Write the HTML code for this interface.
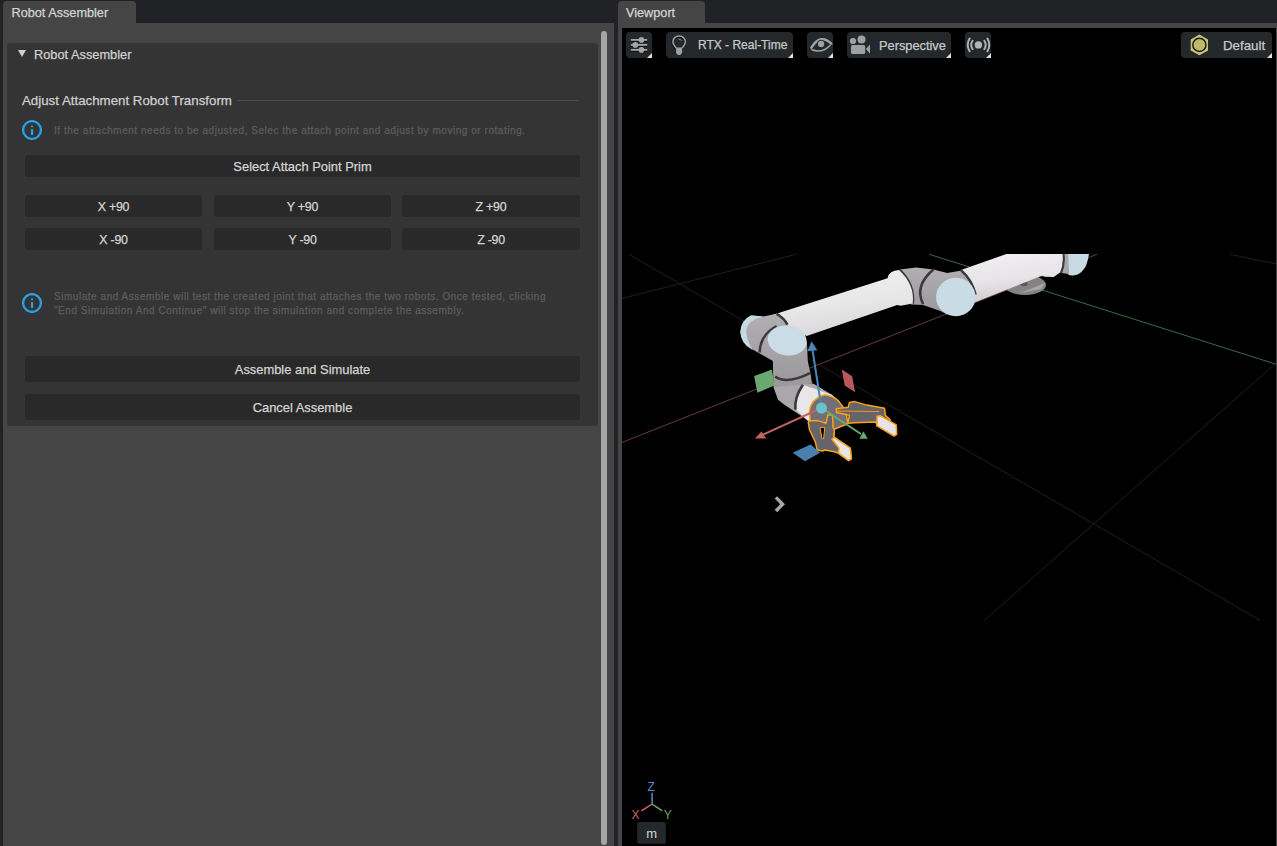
<!DOCTYPE html>
<html><head><meta charset="utf-8">
<style>
*{margin:0;padding:0;box-sizing:border-box}
html,body{width:1277px;height:846px;overflow:hidden;background:#202226;font-family:"Liberation Sans",sans-serif}
.abs{position:absolute}
.tab{position:absolute;background:#454545;border-radius:4px 4px 0 0;color:#d4d4d4;font-size:12.7px;white-space:nowrap}
.panel{position:absolute;background:#454545}
.frame{position:absolute;background:#343434;border-radius:3px}
.btn{position:absolute;background:#292929;border-radius:3px;color:#d4d4d4;font-size:12.9px;text-align:center;white-space:nowrap;padding-top:1px}
.txt{position:absolute;white-space:nowrap}
body{-webkit-text-stroke:0.25px currentColor}
.info{position:absolute;color:#5c5c5c;font-size:10px;letter-spacing:0.54px;white-space:nowrap;line-height:14px}
.icon{position:absolute;width:20px;height:20px;border:2px solid #1e9bf0;border-radius:50%}
.tb{position:absolute;background:#25282b;border-radius:4px;top:32px;height:26px}
.tb .c{position:absolute;right:0;bottom:0;width:0;height:0;border-left:5px solid transparent;border-bottom:5px solid #e0e0e0}
.tbt{position:absolute;color:#c8c8c8;font-size:12.8px;white-space:nowrap}
</style></head><body>
<!-- left tab -->
<div class="tab" style="left:3px;top:1px;width:133px;height:22px"><span class="txt" style="left:8.5px;top:5px">Robot Assembler</span></div>
<div class="panel" style="left:3px;top:23px;width:611px;height:823px"></div>
<div class="frame" style="left:7px;top:43px;width:591px;height:383px"></div>
<!-- scrollbar -->
<div class="abs" style="left:601px;top:31px;width:6px;height:814px;background:#a5a5a5;border-radius:3px"></div>

<!-- header -->
<div class="abs" style="left:18px;top:50px;width:0;height:0;border-left:4px solid transparent;border-right:4px solid transparent;border-top:7.5px solid #d0d0d0"></div>
<span class="txt" style="left:34px;top:47px;color:#d0d0d0;font-size:12.8px">Robot Assembler</span>

<span class="txt" style="left:22px;top:93px;color:#d0d0d0;font-size:13.3px">Adjust Attachment Robot Transform</span>
<div class="abs" style="left:237px;top:100px;width:342px;height:1px;background:#4b4b4b"></div>

<svg class="abs" style="left:22px;top:120px" width="20" height="20" viewBox="0 0 20 20"><circle cx="10" cy="10" r="8.9" fill="none" stroke="#28a0ea" stroke-width="2.3"/><rect x="8.9" y="5.6" width="2.3" height="1.7" rx="0.8" fill="#28a0ea"/><rect x="8.9" y="8.9" width="2.3" height="6.2" rx="0.9" fill="#28a0ea"/></svg>
<div class="info" style="left:54px;top:123.5px">If the attachment needs to be adjusted, Selec the attach point and adjust by moving or rotating.</div>

<div class="btn" style="left:25px;top:155px;width:555px;height:22px;line-height:22px">Select Attach Point Prim</div>
<div class="btn" style="left:25px;top:195px;width:177px;height:22px;line-height:22px;font-size:12.4px;letter-spacing:-0.25px">X +90</div>
<div class="btn" style="left:214px;top:195px;width:177px;height:22px;line-height:22px;font-size:12.4px;letter-spacing:-0.25px">Y +90</div>
<div class="btn" style="left:402px;top:195px;width:178px;height:22px;line-height:22px;font-size:12.4px;letter-spacing:-0.25px">Z +90</div>
<div class="btn" style="left:25px;top:228px;width:177px;height:22px;line-height:22px;font-size:12.4px;letter-spacing:-0.25px">X -90</div>
<div class="btn" style="left:214px;top:228px;width:177px;height:22px;line-height:22px;font-size:12.4px;letter-spacing:-0.25px">Y -90</div>
<div class="btn" style="left:402px;top:228px;width:178px;height:22px;line-height:22px;font-size:12.4px;letter-spacing:-0.25px">Z -90</div>

<svg class="abs" style="left:22px;top:293px" width="20" height="20" viewBox="0 0 20 20"><circle cx="10" cy="10" r="8.9" fill="none" stroke="#28a0ea" stroke-width="2.3"/><rect x="8.9" y="5.6" width="2.3" height="1.7" rx="0.8" fill="#28a0ea"/><rect x="8.9" y="8.9" width="2.3" height="6.2" rx="0.9" fill="#28a0ea"/></svg>
<div class="info" style="left:54px;top:289.5px">Simulate and Assemble will test the created joint that attaches the two robots. Once tested, clicking<br>"End Simulation And Continue" will stop the simulation and complete the assembly.</div>

<div class="btn" style="left:25px;top:356px;width:555px;height:26px;line-height:25px">Assemble and Simulate</div>
<div class="btn" style="left:25px;top:394px;width:555px;height:26px;line-height:25px">Cancel Assemble</div>

<!-- right tab -->
<div class="tab" style="left:618px;top:1px;width:87px;height:22px"><span class="txt" style="left:8px;top:5px">Viewport</span></div>
<div class="panel" style="left:618px;top:23px;width:659px;height:823px"></div>
<div class="abs" style="left:622px;top:28px;width:654px;height:818px;background:#000"></div>


<svg class="abs" style="left:622px;top:28px" width="654" height="818" viewBox="622 28 654 818">
<defs>
<linearGradient id="tubeU" x1="0" y1="0" x2="0.25" y2="1"><stop offset="0" stop-color="#f2f0f2"/><stop offset="0.6" stop-color="#e6e4e6"/><stop offset="1" stop-color="#cfcdd0"/></linearGradient>
<linearGradient id="tubeL" x1="0" y1="0" x2="0.3" y2="1"><stop offset="0" stop-color="#f0eff0"/><stop offset="0.6" stop-color="#e9e8e9"/><stop offset="1" stop-color="#dad8da"/></linearGradient>
<linearGradient id="grayJ" x1="0" y1="0" x2="0" y2="1"><stop offset="0" stop-color="#b2afb2"/><stop offset="0.5" stop-color="#a6a3a6"/><stop offset="1" stop-color="#9a979a"/></linearGradient>
<clipPath id="clipTop"><rect x="622" y="254" width="654" height="600"/></clipPath>
</defs>
<g fill="none" stroke-width="1">
<line x1="628.8" y1="254.2" x2="1260.6" y2="620.7" stroke="#1f1f1f"/>
<line x1="796.6" y1="254.2" x2="622" y2="298.4" stroke="#1f1f1f"/>
<line x1="1275" y1="364" x2="984" y2="620.7" stroke="#1f1f1f"/>
<line x1="1229.6" y1="254.3" x2="1276" y2="263.8" stroke="#1f1f1f"/>
<line x1="929.3" y1="254.3" x2="1276" y2="364.2" stroke="#3c6a44"/>
<line x1="1097" y1="254.3" x2="622" y2="442.4" stroke="#6a3a3a"/>
</g>
<g clip-path="url(#clipTop)">
<!-- base disc -->
<ellipse cx="1025" cy="285" rx="21" ry="10" fill="#858284"/>
<path d="M1020,293 L1041,289 L1045,283 L1028,290 Z" fill="#a9a7a9"/>
<ellipse cx="1024" cy="284" rx="4" ry="2" fill="#5a5858"/>
<!-- upper tube -->
<path d="M961,270 L1006.4,254 L1064,254 L1061.5,271.5 L1053.7,277 L1045,276.7 L1041.7,275.8 L974.7,302.4 Z" fill="url(#tubeU)"/>
<path d="M1063,254 L1068.4,254 L1068.4,274 L1062,273 Z" fill="#a9a7aa"/>
<path d="M1063.5,254 Q1065,264 1061,273" stroke="#3a3a3c" stroke-width="2" fill="none"/>
<path d="M1068,254 L1089,254 Q1087,266 1083.9,269 Q1079,276 1072,275.5 L1068.4,275 Z" fill="#c9dae4"/>
<!-- elbow gray -->
<path d="M899.8,269.6 L916.2,267.5 L933.4,269.6 L947.2,273.1 L961.8,270.5 L975.6,293.8 L960,300 L947.2,314.4 L940.3,311 L923,305 L911,304.5 Z" fill="url(#grayJ)"/>
<path d="M899.5,269.8 Q915,285 912.7,303.5" stroke="#3a3a3c" stroke-width="2.6" fill="none"/>
<path d="M933.4,269.6 Q914,286 923.1,304.1" stroke="#3a3a3c" stroke-width="2.6" fill="none"/>
<path d="M961,270.1 Q972,280 975.6,294.5" stroke="#3a3a3c" stroke-width="2.6" fill="none"/>
<ellipse cx="955.8" cy="297" rx="19.8" ry="19.2" fill="#c9dbe5"/>
<!-- lower tube -->
<path d="M764.5,317.5 L887.5,278.3 Q889,270.5 899,270.1 Q915,285 912.7,303.5 L900.7,305.8 L897.2,305 L806.7,336.1 Z" fill="url(#tubeL)"/>
<!-- shoulder joint -->
<path d="M752,315.7 L763.4,316.6 L776.6,313.8 L787.5,324.7 L806.9,342 L807.8,361 L810.6,374.3 L812,383.2 L775.7,390 L773.5,387.3 L772.8,361 L753,349.7 L740.2,331.7 Z" fill="url(#grayJ)"/>
<path d="M751,315.2 Q741,320 740.2,331.7 Q741,344 751.5,349.2 L753,349.7 Q746,340 746.3,330 Q748,320 763.4,316.6 Z" fill="#c6d8e2"/>
<path d="M776.6,313.8 Q784,318 787.5,324.7" stroke="#3a3a3c" stroke-width="2.5" fill="none"/>
<path d="M776.6,326 Q760,335 759.6,352.6" stroke="#3a3a3c" stroke-width="2.4" fill="none"/>
<ellipse cx="787.2" cy="340.5" rx="19.6" ry="15" transform="rotate(8 787.2 340.5)" fill="#cadce6"/>
<!-- wrist lower -->
<path d="M773.5,387.3 L812,383.2 L815.3,384.8 L831.8,394.7 L840,402 L813,425 L802.9,417 L784.7,405 L778,399.7 Z" fill="#aaa7aa"/>
<path d="M775.2,376.5 Q786.4,385 810,373.2" stroke="#3a3a3c" stroke-width="2.6" fill="none"/>
<path d="M802.9,384.8 L831.8,394.7 L840,402 L813,425 L795.5,409.6 Q796,395 802.9,384.8 Z" fill="#e8e6e8"/>
<path d="M802.9,384.8 Q794,398 795.5,409.6" stroke="#3a3a3c" stroke-width="2.6" fill="none"/>
</g>

<!-- gripper -->
<g stroke="#f7a21a" stroke-width="1.5" stroke-linejoin="round">
<path d="M809.3,412.7 Q810,399 824.8,394.7 Q834,396 839,401.8 L842.3,406 L846,412 L847.8,423.2 L844.9,425 L841.4,426.2 L834.3,429.2 L833.7,436.9 L826,438 L817,436 Q810,425 809.3,412.7 Z" fill="#727076"/>
<path d="M836.1,408.8 L848.3,407.2 L849.4,402.4 L854.7,401.6 L866.9,405.1 L884.5,408.3 L885.3,415.2 L890.3,420 L877,425.9 L876,422.1 L854.7,422.7 L847.8,423.2 L849.4,415.2 L836.6,412.6 Z" fill="#66646a"/>
<path d="M877,416.3 L880.2,415.7 L896.2,424.8 L896.7,434.4 L894,436 L877,425.9 Z" fill="#e6e4ea"/>
<path d="M837.1,411 L879.1,411.5" stroke-width="0.9"/>
<path d="M808.9,420.9 L817.7,420.6 L826,423.3 L827.8,415 L832.5,415 L833.1,428 L834.3,429.2 L833.7,436.9 L834.9,437.5 L850.2,448.1 L851.4,458.7 L848.5,460.5 L837.8,452.8 L833.1,451.6 L824.8,449.9 L822.5,451 L817.1,449.9 L815.4,442.2 L809.5,429.8 L808.3,422.7 Z" fill="#66646a"/>
<path d="M831.9,439.2 L834.3,437.5 L850.2,448.1 L851.4,458.7 L848.5,460.5 L838.4,452.8 L839,448.1 Z" fill="#e6e4ea"/>
<path d="M820.1,427.4 L824.8,427.4 L823.6,438.6 L821.9,438.6 Z" fill="#000" stroke-width="1"/>
</g>
<!-- gizmo -->
<path d="M754.1,376.1 L771.9,369.5 L774.4,385.6 L757.4,392.7 Z" fill="#6aa870"/>
<path d="M841.8,369.6 L852.2,376.2 L855.1,392.3 L844.7,385.6 Z" fill="#b85a5c"/>
<path d="M792.7,452.8 L810.6,444.6 L820.1,452.8 L805,461.3 Z" fill="#4a80ae"/>
<line x1="821.5" y1="408" x2="812.5" y2="350" stroke="#4a86b8" stroke-width="2"/>
<path d="M811.6,341.2 L807.3,351.2 L817.3,350.2 Z" fill="#4a86b8"/>
<line x1="821.5" y1="408" x2="762" y2="435" stroke="#c06262" stroke-width="2"/>
<path d="M754.9,438.6 L761.5,431.5 L766.2,438.6 Z" fill="#c06262"/>
<line x1="821.5" y1="408" x2="861" y2="434" stroke="#6aaa70" stroke-width="2"/>
<path d="M859.4,438.8 L863.4,431.2 L867.8,438.8 Z" fill="#6aaa70"/>
<circle cx="821.5" cy="408" r="5.5" fill="#6cc2ca"/>
<!-- chevron -->
<path d="M775.9,497.4 L782.6,504.2 L775.9,511" stroke="#a6a6a6" stroke-width="3.4" fill="none"/>
<!-- axis gizmo -->
<line x1="652.1" y1="792.7" x2="652.1" y2="804.7" stroke="#5a8ac6" stroke-width="1.5"/>
<line x1="652.1" y1="804.2" x2="641.2" y2="810.8" stroke="#c46666" stroke-width="1.5"/>
<line x1="652.1" y1="804.2" x2="662.3" y2="810.8" stroke="#6aa56a" stroke-width="1.5"/>
<text x="647.6" y="791" fill="#5a8ac6" font-family="Liberation Sans" font-size="12">Z</text>
<text x="631.5" y="819" fill="#c46666" font-family="Liberation Sans" font-size="12">X</text>
<text x="663.8" y="819" fill="#6aa56a" font-family="Liberation Sans" font-size="12">Y</text>
<rect x="637.2" y="822" width="28.6" height="21.8" rx="2.5" fill="#25282b"/>
<text x="651.6" y="838.2" fill="#d4d4d4" font-family="Liberation Sans" font-size="13" text-anchor="middle">m</text>
</svg>

<!-- toolbar -->
<div class="tb" style="left:626px;width:26px"><div class="c"></div>
<svg class="abs" style="left:0;top:0" width="26" height="26" viewBox="0 0 26 26">
<g stroke="#0a0c10" stroke-width="2" opacity="0.9"><line x1="4.9" y1="9" x2="21.2" y2="9"/><line x1="4.9" y1="14" x2="21.2" y2="14"/><line x1="4.9" y1="19" x2="21.2" y2="19"/></g>
<g fill="#a6a6a6" stroke="#a6a6a6" stroke-width="1.8"><line x1="4.9" y1="7.9" x2="21.2" y2="7.9"/><line x1="4.9" y1="12.9" x2="21.2" y2="12.9"/><line x1="4.9" y1="17.9" x2="21.2" y2="17.9"/></g>
<g fill="#a6a6a6"><circle cx="15.4" cy="7.9" r="2.8"/><circle cx="9.3" cy="12.9" r="2.8"/><circle cx="15.4" cy="17.9" r="2.8"/></g>
</svg></div>
<div class="tb" style="left:666px;width:127px"><div class="c"></div>
<svg class="abs" style="left:0;top:0" width="30" height="26" viewBox="0 0 30 26">
<path d="M9.4,16.8 C7.3,14.3 6.2,12.8 6.2,10.6 C6.2,7.2 9,4.8 12.4,4.8 C15.8,4.8 18.6,7.2 18.6,10.6 C18.6,12.8 17.5,14.3 15.4,16.8" fill="none" stroke="#0a0c10" stroke-width="1.6"/>
<path d="M10.1,16 C8,13.5 6.9,12 6.9,9.8 C6.9,6.4 9.7,4 13.1,4 C16.5,4 19.3,6.4 19.3,9.8 C19.3,12 18.2,13.5 16.1,16" fill="none" stroke="#a0a0a0" stroke-width="1.5"/>
<path d="M10.1,15.6 L16.1,15.6 L16.1,21 L14.2,22.9 L12,22.9 L10.1,21 Z" fill="#a0a0a0"/>
<path d="M12.5,7.2 Q14.6,7 15.8,8.8" fill="none" stroke="#a0a0a0" stroke-width="0.8"/>
</svg>
<span class="tbt" style="left:32px;top:6px;font-size:12px">RTX - Real-Time</span></div>
<div class="tb" style="left:807px;width:26px"><div class="c"></div>
<svg class="abs" style="left:0;top:0" width="26" height="26" viewBox="0 0 26 26">
<path d="M4.4,15.6 Q13.5,1 24.3,11.6" fill="none" stroke="#a0a0a0" stroke-width="2.5" stroke-linecap="round"/>
<circle cx="14.1" cy="12" r="3.8" fill="#a0a0a0" stroke="#0a0c10" stroke-width="0.8"/>
<path d="M5,17.8 Q15,21.6 23,13.4" fill="none" stroke="#a0a0a0" stroke-width="1.5" stroke-linecap="round"/>
</svg></div>
<div class="tb" style="left:847px;width:104px"><div class="c"></div>
<svg class="abs" style="left:0;top:0" width="30" height="26" viewBox="0 0 30 26">
<circle cx="6" cy="9" r="3.1" fill="#a0a0a0"/><circle cx="14.5" cy="7.4" r="4" fill="#a0a0a0"/>
<rect x="4" y="12.9" width="14.2" height="9.2" rx="1.6" fill="#a0a0a0"/>
<path d="M18.9,17.1 L23,12.4 L23,21.8 Z" fill="#a0a0a0"/>
</svg>
<span class="tbt" style="left:32px;top:6px">Perspective</span></div>
<div class="tb" style="left:965px;width:26px"><div class="c"></div>
<svg class="abs" style="left:0;top:0" width="26" height="26" viewBox="0 0 26 26">
<circle cx="13.4" cy="12.9" r="3.7" fill="#b4b4b4"/>
<g fill="none" stroke="#b4b4b4" stroke-width="1.9" stroke-linecap="round">
<path d="M7.6,8.7 Q4.8,12.9 7.6,17.1"/><path d="M19.3,8.7 Q22.1,12.9 19.3,17.1"/>
<path d="M4.6,6.6 Q0.8,12.9 4.6,19.2"/><path d="M22.4,6.6 Q26.2,12.9 22.4,19.2"/>
</g>
</svg></div>
<div class="tb" style="left:1181px;width:91px"><div class="c"></div>
<svg class="abs" style="left:0;top:0" width="30" height="26" viewBox="0 0 30 26">
<path d="M18.4,2.6 L27,7.6 L27,18.6 L18.4,23.2 L9.7,18.6 L9.7,7.6 Z" fill="#c9c576"/>
<circle cx="18.4" cy="12.9" r="6.6" fill="#bdba6c" stroke="#15171a" stroke-width="1.4"/>
</svg>
<span class="tbt" style="left:42px;top:6px;font-size:13.3px">Default</span></div>

</body></html>
